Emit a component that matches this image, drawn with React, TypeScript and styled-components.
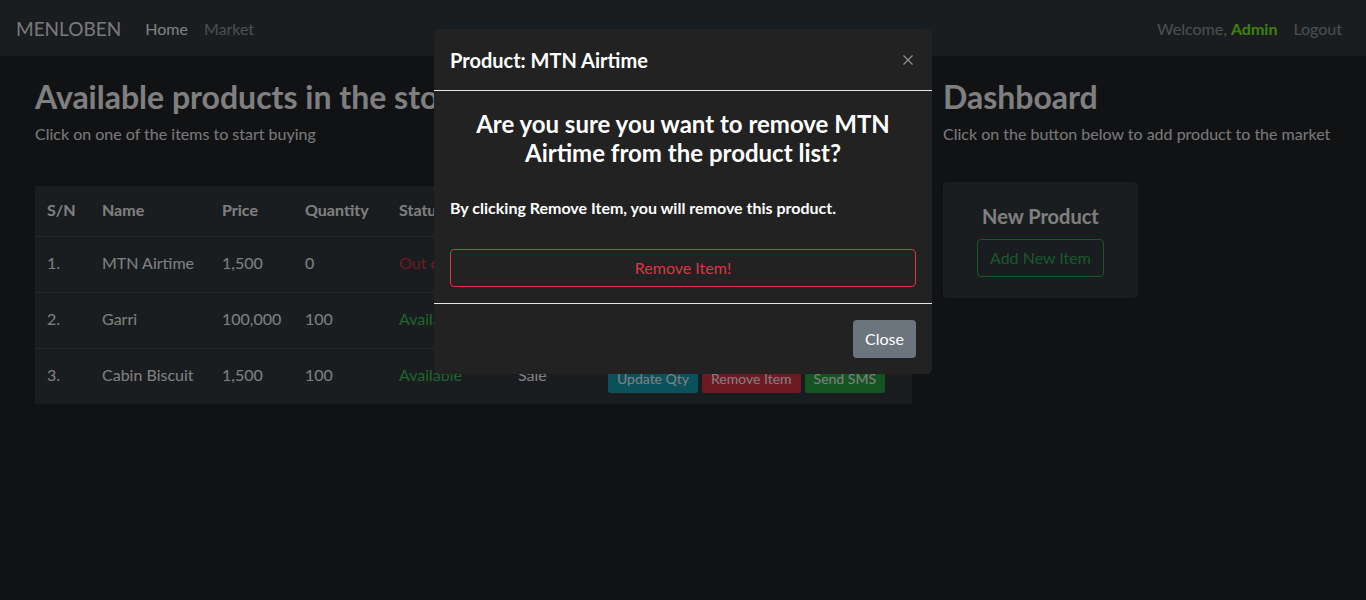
import styled, { createGlobalStyle } from "styled-components";

const GlobalStyle = createGlobalStyle`
  body {
    margin: 0;
    background-color: #212529;
    color: #fff;
    font-family: Lato, "Noto Sans", sans-serif;
    font-size: 16px;
  }
  * {
    box-sizing: border-box;
  }
`;

const Nav = styled.nav`
  display: flex;
  align-items: center;
  height: 56px;
  padding: 0 16px;
  background-color: #343a40;
`;

const Brand = styled.span`
  font-size: 19px;
  color: rgba(255, 255, 255, 0.95);
  margin-right: 16px;
`;

const NavLink = styled.a<{ $active?: boolean }>`
  padding: 8px;
  color: ${(p) => (p.$active ? "#fff" : "rgba(255, 255, 255, 0.5)")};
  text-decoration: none;
`;

const NavRight = styled.div`
  margin-left: auto;
  display: flex;
  align-items: center;
`;

const Welcome = styled.span`
  padding: 8px;
  color: rgba(255, 255, 255, 0.5);

  b {
    color: #7cff1c;
  }
`;

const Main = styled.main`
  display: flex;
  gap: 31px;
  padding: 22px 35px 0;
`;

const LeftCol = styled.section`
  width: 877px;
`;

const RightCol = styled.section`
  flex: 1;
`;

const Title = styled.h2`
  font-size: 32px;
  font-weight: 700;
  line-height: 1.2;
  margin: 0 0 6px;
  color: #fff;
  white-space: nowrap;
`;

const Lead = styled.p`
  margin: 0;
  line-height: 24px;
  color: #f2f2f2;
`;

const Table = styled.table`
  margin-top: 40px;
  width: 100%;
  border-collapse: collapse;
  background-color: #343a40;
  table-layout: fixed;

  th,
  td {
    text-align: left;
    padding: 0 12px 4px;
    white-space: nowrap;
    overflow: hidden;
  }

  th {
    height: 50px;
    font-weight: 700;
  }

  td {
    height: 56px;
    border-top: 1px solid #4b5157;
  }
`;

const Status = styled.span<{ $ok: boolean }>`
  color: ${(p) => (p.$ok ? "#3cc95a" : "#dc3545")};
`;

const Actions = styled.div`
  display: flex;
  gap: 4px;
  padding-top: 8px;
`;

const SmallBtn = styled.button<{ $bg: string }>`
  font-family: inherit;
  font-size: 14px;
  line-height: 20px;
  padding: 4px 9px;
  border: none;
  border-radius: 3px;
  color: #fff;
  background-color: ${(p) => p.$bg};
`;

const Card = styled.div`
  margin-top: 36px;
  display: inline-flex;
  flex-direction: column;
  align-items: center;
  gap: 11px;
  padding: 22px 34px 21px;
  background-color: #343a40;
  border-radius: 4px;
`;

const CardTitle = styled.h5`
  margin: 0;
  font-size: 20px;
  line-height: 24px;
  font-weight: 700;
`;

const OutlineBtn = styled.button<{ $color: string; $full?: boolean }>`
  font-family: inherit;
  font-size: 16px;
  line-height: 24px;
  padding: 6px 12px;
  background: transparent;
  border: 1px solid ${(p) => p.$color};
  color: ${(p) => p.$color};
  border-radius: 4px;
  width: ${(p) => (p.$full ? "100%" : "auto")};
`;

const Backdrop = styled.div`
  position: fixed;
  inset: 0;
  background-color: rgba(0, 0, 0, 0.5);
`;

const Modal = styled.div`
  position: fixed;
  top: 29px;
  left: 434px;
  width: 498px;
  background-color: #222;
  border-radius: 6px;
  color: #fff;
`;

const ModalHeader = styled.div`
  display: flex;
  align-items: center;
  justify-content: space-between;
  height: 62px;
  padding: 0 16px;
  border-bottom: 1px solid #e6e6e6;
`;

const ModalTitle = styled.h5`
  margin: 0;
  font-size: 20px;
  font-weight: 700;
`;

const CloseX = styled.button`
  background: transparent;
  border: none;
  padding: 0;
  width: 16px;
  height: 16px;
  display: flex;
  align-items: center;
  justify-content: center;
`;

const ModalBody = styled.div`
  padding: 18px 16px 16px;
`;

const Question = styled.h3`
  margin: 0 0 29px;
  font-size: 24px;
  line-height: 29px;
  font-weight: 700;
  text-align: center;
`;

const Note = styled.p`
  margin: 0 0 29px;
  font-weight: 700;
  line-height: 24px;
`;

const ModalFooter = styled.div`
  display: flex;
  justify-content: flex-end;
  padding: 16px;
  border-top: 1px solid #e6e6e6;
`;

const CloseBtn = styled.button`
  font-family: inherit;
  font-size: 16px;
  line-height: 24px;
  padding: 7px 12px;
  border: none;
  border-radius: 4px;
  background-color: #6c757d;
  color: #fff;
`;

const products = [
  { name: "MTN Airtime", price: "1,500", qty: "0", ok: false, sale: "Not on Sale" },
  { name: "Garri", price: "100,000", qty: "100", ok: true, sale: "On Sale" },
  { name: "Cabin Biscuit", price: "1,500", qty: "100", ok: true, sale: "Sale" },
];

export default function App() {
  return (
    <>
      <GlobalStyle />
      <Nav>
        <Brand>MENLOBEN</Brand>
        <NavLink $active href="#">
          Home
        </NavLink>
        <NavLink href="#">Market</NavLink>
        <NavRight>
          <Welcome>
            Welcome, <b>Admin</b>
          </Welcome>
          <NavLink href="#">Logout</NavLink>
        </NavRight>
      </Nav>
      <Main>
        <LeftCol>
          <Title>Available products in the store</Title>
          <Lead>Click on one of the items to start buying</Lead>
          <Table>
            <colgroup>
              <col style={{ width: 55 }} />
              <col style={{ width: 120 }} />
              <col style={{ width: 83 }} />
              <col style={{ width: 94 }} />
              <col style={{ width: 119 }} />
              <col style={{ width: 90 }} />
              <col />
            </colgroup>
            <thead>
              <tr>
                <th>S/N</th>
                <th>Name</th>
                <th>Price</th>
                <th>Quantity</th>
                <th>Status</th>
                <th>Sale</th>
                <th>Actions</th>
              </tr>
            </thead>
            <tbody>
              {products.map((p, i) => (
                <tr key={p.name}>
                  <td>{i + 1}.</td>
                  <td>{p.name}</td>
                  <td>{p.price}</td>
                  <td>{p.qty}</td>
                  <td>
                    <Status $ok={p.ok}>{p.ok ? "Available" : "Out of stock"}</Status>
                  </td>
                  <td>{p.sale}</td>
                  <td>
                    <Actions>
                      <SmallBtn $bg="#17a2b8">Update Qty</SmallBtn>
                      <SmallBtn $bg="#dc3545">Remove Item</SmallBtn>
                      <SmallBtn $bg="#28a745">Send SMS</SmallBtn>
                    </Actions>
                  </td>
                </tr>
              ))}
            </tbody>
          </Table>
        </LeftCol>
        <RightCol>
          <Title>Dashboard</Title>
          <Lead>Click on the button below to add product to the market</Lead>
          <Card>
            <CardTitle>New Product</CardTitle>
            <OutlineBtn $color="#2fb04f">Add New Item</OutlineBtn>
          </Card>
        </RightCol>
      </Main>
      <Backdrop />
      <Modal>
        <ModalHeader>
          <ModalTitle>Product: MTN Airtime</ModalTitle>
          <CloseX aria-label="Close">
            <svg width="12" height="12" viewBox="0 0 12 12">
              <path d="M1.5 1.5L10.5 10.5M10.5 1.5L1.5 10.5" stroke="#8f8f8f" strokeWidth="1.3" />
            </svg>
          </CloseX>
        </ModalHeader>
        <ModalBody>
          <Question>Are you sure you want to remove MTN Airtime from the product list?</Question>
          <Note>By clicking Remove Item, you will remove this product.</Note>
          <OutlineBtn $color="#dc3545" $full>
            Remove Item!
          </OutlineBtn>
        </ModalBody>
        <ModalFooter>
          <CloseBtn>Close</CloseBtn>
        </ModalFooter>
      </Modal>
    </>
  );
}
